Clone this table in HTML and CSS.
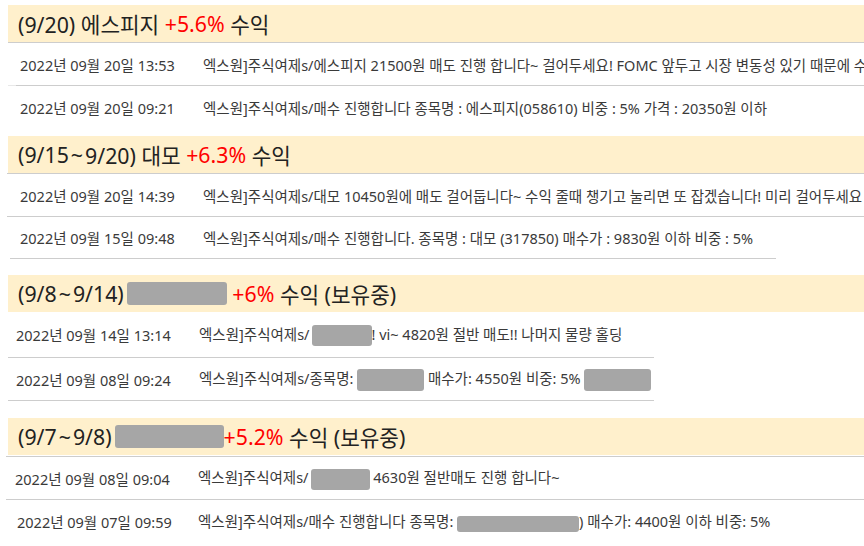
FILE: index.html
```html
<!DOCTYPE html>
<html lang="ko">
<head>
<meta charset="utf-8">
<title>수익 내역</title>
<link rel="stylesheet" href="styles.css">
</head>
<body>
<div class="sec s1">
  <div class="head">(9/20) 에스피지&nbsp;<span class="up">+5.6%</span>&nbsp;수익</div>
  <div class="row r1a"><span class="date">2022년 09월 20일 13:53</span><span class="msg">엑스원]주식여제s/에스피지 21500원 매도 진행 합니다~ 걸어두세요! FOMC 앞두고 시장 변동성 있기 때문에 수익 챙기시길 바랍니다</span></div>
  <div class="row r1b"><span class="date">2022년 09월 20일 09:21</span><span class="msg">엑스원]주식여제s/매수 진행합니다 종목명 : 에스피지(058610) 비중 : 5% 가격 : 20350원 이하</span></div>
</div>
<div class="sec s2">
  <div class="head">(9/15<span class="tl">~</span>9/20) 대모&nbsp;<span class="up">+6.3%</span>&nbsp;수익</div>
  <div class="row r2a"><span class="date">2022년 09월 20일 14:39</span><span class="msg">엑스원]주식여제s/대모 10450원에 매도 걸어둡니다~ 수익 줄때 챙기고 눌리면 또 잡겠습니다! 미리 걸어두세요</span></div>
  <div class="row r2b"><span class="date">2022년 09월 15일 09:48</span><span class="msg">엑스원]주식여제s/매수 진행합니다. 종목명 : 대모 (317850) 매수가 : 9830원 이하 비중 : 5%</span></div>
</div>
<div class="sec s3">
  <div class="head">(9/8<span class="tl">~</span>9/14)<span class="mask mh3"></span>&nbsp;<span class="up">+6%</span>&nbsp;수익 (보유중)</div>
  <div class="row r3a"><span class="date">2022년 09월 14일 13:14</span><span class="msg">엑스원]주식여제s/<span class="mask m3a"></span>! vi~ 4820원 절반 매도!! 나머지 물량 홀딩</span></div>
  <div class="row r3b"><span class="date">2022년 09월 08일 09:24</span><span class="msg">엑스원]주식여제s/종목명: <span class="mask m3b"></span> 매수가: 4550원 비중: 5% <span class="mask m3c"></span></span></div>
</div>
<div class="sec s4">
  <div class="head">(9/7<span class="tl">~</span>9/8)<span class="mask mh4"></span><span class="up">+5.2%</span>&nbsp;수익 (보유중)</div>
  <div class="row r4a"><span class="date">2022년 09월 08일 09:04</span><span class="msg">엑스원]주식여제s/<span class="mask m4a"></span> 4630원 절반매도 진행 합니다~</span></div>
  <div class="row r4b"><span class="date">2022년 09월 07일 09:59</span><span class="msg">엑스원]주식여제s/매수 진행합니다 종목명: <span class="mask m4b"></span>) 매수가: 4400원 이하 비중: 5%</span></div>
</div>
</body>
</html>
```

FILE: styles.css
```css
html, body {
  margin: 0;
  padding: 0;
  overflow: hidden;
  background: #fff;
}
body {
  width: 864px;
  font-family: "Noto Sans", "Noto Sans CJK KR", sans-serif;
  color: #333;
}
.sec {
  white-space: nowrap;
}
.head {
  margin-left: 8px;
  height: 37px;
  width: 900px;
  box-sizing: border-box;
  padding-left: 10px;
  background: #fff0cc;
  color: #222;
  font-size: 21.3px;
  display: flex;
  align-items: center;
}
.tl {
  margin: 0 2px;
}
.up {
  color: #ff0000;
}
.row {
  display: flex;
  align-items: center;
  height: 42px;
  font-size: 14.5px;
  color: #3a3a3a;
}
.date {
  flex: none;
  width: 183px;
}
.msg {
  flex: none;
}
.mask {
  display: inline-block;
  background: #a6a6a6;
  border-radius: 3px;
  vertical-align: middle;
}

/* section 1 */
.s1 { margin-top: 5px; }
.r1a { margin-left: 8px; padding-left: 12px; border-top: 1px solid #cdcdcd; width: 1100px; }
.r1b { margin-left: 8px; padding-left: 12px; border-top: 1px solid #cdcdcd; border-image: linear-gradient(to right, #e8e8e8 9px, #cdcdcd 9px) 1; width: 1100px; }

/* section 2 */
.s2 { margin-top: 8px; }
.r2a { padding-left: 20px; border-top: 1px solid #cdcdcd; border-bottom: 1px solid #cdcdcd; border-image: linear-gradient(to right, #fff 8px, #cdcdcd 8px) 1; width: 1100px; }
.r2b { margin-left: 8px; padding-left: 12px; border-bottom: 1px solid #cdcdcd; border-image: linear-gradient(to right, #fff 3px, #cdcdcd 3px) 1; width: 768px; box-sizing: border-box; height: 42px; }

/* section 3 */
.s3 { margin-top: 16px; }
.r3a { margin-left: 8px; padding-left: 8px; height: 45px; width: 646px; box-sizing: border-box; }
.r3b { margin-left: 8px; padding-left: 8px; border-top: 1px solid #cdcdcd; border-bottom: 1px solid #cdcdcd; width: 646px; box-sizing: border-box; height: 44px; }
.mh3 { width: 100px; height: 23px; margin-left: 3px; }
.m3a { width: 60px; height: 21px; margin-left: 2px; }
.m3b { width: 67px; height: 22px; }
.m3c { width: 67px; height: 22px; }

/* section 4 */
.s4 { margin-top: 17px; }
.r4a { margin-left: 6px; padding-left: 9px; margin-top: 1px; border-top: 1px solid #cdcdcd; width: 1100px; }
.r4b { margin-left: 6px; padding-left: 11px; border-top: 1px solid #cdcdcd; width: 1100px; }
.r4b .date { width: 181px; }
.mh4 { width: 109px; height: 23px; margin-left: 3px; }
.m4a { width: 59px; height: 21px; margin-left: 2px; }
.m4b { width: 122px; height: 16px; }
```
